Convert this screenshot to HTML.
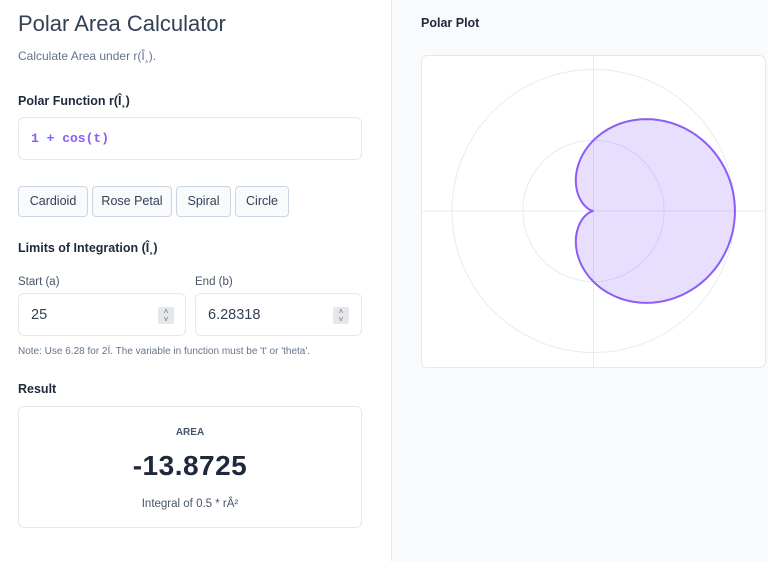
<!DOCTYPE html>
<html><head><meta charset="utf-8"><style>
*{box-sizing:border-box;margin:0;padding:0}
body{width:768px;height:561px;overflow:hidden;font-family:"Liberation Sans",sans-serif;background:#fff;color:#1e293b;position:relative}
.left{position:absolute;left:0;top:0;width:391px;height:561px;background:#fff}
.right{position:absolute;left:391px;top:0;width:377px;height:561px;background:#f8fafc;border-left:1px solid #e5e7eb}
h1{position:absolute;left:18px;top:11px;font-size:22px;font-weight:400;color:#334155}
.sub{position:absolute;left:18px;top:49px;font-size:12px;color:#64748b}
.lbl{position:absolute;left:18px;font-size:12.5px;font-weight:700;color:#1e293b}
.box{position:absolute;border:1px solid #e2e8f0;border-radius:6px;background:#fff}
.btn{position:absolute;top:186px;height:31px;border:1px solid #cbd5e1;border-radius:4px;background:#f8fafc;font-size:12.5px;color:#334155;line-height:29px;text-align:center}
.small{position:absolute;font-size:11.5px;color:#475569}
.spin{position:absolute;top:13px;width:16px;height:17px;background:#e5e7eb;border-radius:2px;font-size:8px;color:#64748b;text-align:center;line-height:8px;padding-top:1px}
</style></head><body>
<div class="left">
<h1>Polar Area Calculator</h1>
<div class="sub">Calculate Area under r(Î¸).</div>
<div class="lbl" style="top:94px">Polar Function r(Î¸)</div>
<div class="box" style="left:18px;top:117px;width:344px;height:43px"><span style="position:absolute;left:12px;top:13px;font-family:'Liberation Mono',monospace;font-weight:700;font-size:13px;color:#8b5cf6">1 + cos(t)</span></div>
<div class="btn" style="left:18px;width:70px">Cardioid</div>
<div class="btn" style="left:92px;width:80px">Rose Petal</div>
<div class="btn" style="left:176px;width:55px">Spiral</div>
<div class="btn" style="left:235px;width:54px">Circle</div>
<div class="lbl" style="top:241px">Limits of Integration (Î¸)</div>
<div class="small" style="left:18px;top:276px">Start (a)</div>
<div class="small" style="left:195px;top:276px">End (b)</div>
<div class="box" style="left:18px;top:293px;width:168px;height:43px"><span style="position:absolute;left:12px;top:13px;font-size:14.5px;color:#334155">25</span><div class="spin" style="left:139px">˄<br>˅</div></div>
<div class="box" style="left:195px;top:293px;width:167px;height:43px"><span style="position:absolute;left:12px;top:13px;font-size:14.5px;color:#334155">6.28318</span><div class="spin" style="left:137px">˄<br>˅</div></div>
<div class="small" style="left:18px;top:346px;font-size:10px;color:#64748b">Note: Use 6.28 for 2Ï. The variable in function must be 't' or 'theta'.</div>
<div class="lbl" style="top:382px">Result</div>
<div class="box" style="left:18px;top:406px;width:344px;height:122px">
<div style="position:absolute;top:20px;width:100%;text-align:center;font-size:10px;font-weight:700;color:#475569">AREA</div>
<div style="position:absolute;top:43px;width:100%;text-align:center;font-size:28px;font-weight:700;color:#1e293b;letter-spacing:0.5px">-13.8725</div>
<div style="position:absolute;top:91px;width:100%;text-align:center;font-size:11.5px;color:#475569">Integral of 0.5 * rÂ²</div>
</div>
</div>
<div class="right">
<div style="position:absolute;left:29px;top:16px;font-size:12.5px;font-weight:700;color:#1e293b">Polar Plot</div>
<svg style="position:absolute;left:29px;top:55px" width="345" height="313">
<rect x="0.5" y="0.5" width="344" height="312" rx="6" fill="#fff" stroke="#e2e8f0"/>
<line x1="0" y1="156" x2="345" y2="156" stroke="#e8eaf4"/>
<line x1="172.5" y1="0" x2="172.5" y2="313" stroke="#e8eaf4"/>
<circle cx="172.5" cy="156" r="141.5" fill="none" stroke="#e8eaf4"/>
<circle cx="172.5" cy="156" r="70.7" fill="none" stroke="#e8eaf4"/>
<path id="c" fill="rgba(139,92,246,0.2)" stroke="#8b5cf6" stroke-width="2"/>
</svg>
</div>
<script>
var d="";for(var i=0;i<=360;i++){var t=i*Math.PI/180,r=(1+Math.cos(t))*70.7;var x=172.5+r*Math.cos(t),y=156-r*Math.sin(t);d+=(i?"L":"M")+x.toFixed(2)+" "+y.toFixed(2);}d+="Z";document.getElementById("c").setAttribute("d",d);
</script>
</body></html>
